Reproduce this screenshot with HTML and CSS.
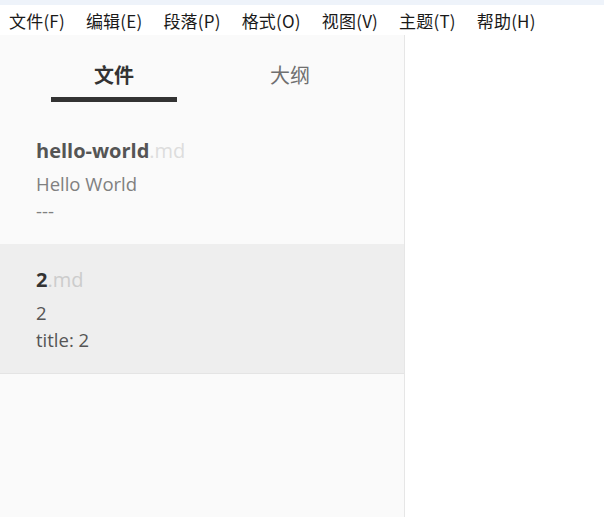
FILE: index.html
```
<!DOCTYPE html>
<html lang="zh-CN">
<head>
<meta charset="utf-8">
<title>Typora</title>
<link rel="stylesheet" href="styles.css">
</head>
<body>
<div class="titlestrip"></div>
<nav class="menubar">
  <span class="menu-item">文件(F)</span>
  <span class="menu-item">编辑(E)</span>
  <span class="menu-item">段落(P)</span>
  <span class="menu-item">格式(O)</span>
  <span class="menu-item">视图(V)</span>
  <span class="menu-item">主题(T)</span>
  <span class="menu-item">帮助(H)</span>
</nav>
<div class="app">
  <aside class="sidebar">
    <div class="tabs">
      <div class="tab active">文件</div>
      <div class="tab">大纲</div>
    </div>
    <div class="file-list">
      <div class="file">
        <div class="file-title"><span class="name">hello-world</span><span class="ext">.md</span></div>
        <div class="file-line">Hello World</div>
        <div class="file-line">---</div>
      </div>
      <div class="file selected">
        <div class="file-title"><span class="name">2</span><span class="ext">.md</span></div>
        <div class="file-line">2</div>
        <div class="file-line">title: 2</div>
      </div>
    </div>
  </aside>
  <main class="editor"></main>
</div>
</body>
</html>
```
FILE: styles.css
```
html, body {
  margin: 0;
  padding: 0;
  height: 100%;
}
body {
  display: flex;
  flex-direction: column;
  background: #fff;
  overflow: hidden;
}
.titlestrip {
  height: 5px;
  background: #eef3fa;
  flex: none;
}
.menubar {
  height: 30px;
  flex: none;
  display: flex;
  align-items: center;
  gap: 21px;
  padding-left: 9px;
  font-family: "Noto Sans CJK SC", sans-serif;
  font-size: 17px;
  letter-spacing: 0.2px;
  color: #1a1a1a;
  background: #fff;
}
.app {
  flex: 1;
  display: flex;
  min-height: 0;
}
.sidebar {
  width: 404px;
  flex: none;
  background: #fafafa;
  border-right: 1px solid #e6e6e6;
  display: flex;
  flex-direction: column;
}
.tabs {
  height: 80px;
  display: flex;
  justify-content: center;
  gap: 50px;
  font-family: "Noto Sans CJK SC", sans-serif;
  font-size: 20px;
}
.tab {
  width: 126px;
  text-align: center;
  color: #6f6f6f;
  padding-top: 25px;
  box-sizing: border-box;
  height: 67px;
  line-height: 30px;
}
.tab.active {
  color: #333;
  font-weight: bold;
  border-bottom: 5px solid #333;
}
.file {
  height: 129px;
  box-sizing: border-box;
  padding: 20px 36px 0;
  font-family: "Open Sans", sans-serif;
}
.file.selected {
  background: #eeeeee;
  border-bottom: 1px solid #e4e4e4;
  height: 130px;
}
.file-title {
  font-size: 20px;
  line-height: 32px;
  margin-bottom: 3px;
}
.file-title .name {
  font-weight: bold;
  color: #555;
}
.file-title .ext {
  color: #ddd;
}
.file.selected .name {
  color: #333;
}
.file.selected .ext {
  color: #ccc;
}
.file-line {
  font-size: 18.5px;
  line-height: 27px;
  color: #808080;
}
.file.selected .file-line {
  color: #555;
}
.editor {
  flex: 1;
  background: #fff;
}
```
